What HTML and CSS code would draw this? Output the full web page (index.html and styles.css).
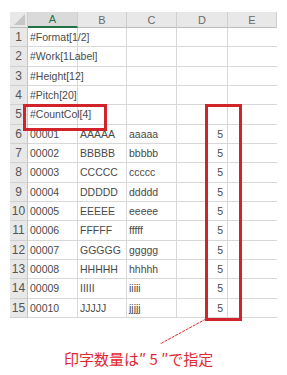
FILE: index.html
```html
<!DOCTYPE html>
<html>
<head>
<meta charset="utf-8">
<link rel="stylesheet" href="styles.css">
</head>
<body>
<div class="page">
  <div class="sheet">
    <div class="hd corner"><span class="tri"></span></div>
    <div class="hd col sel">A</div>
    <div class="hd col">B</div>
    <div class="hd col">C</div>
    <div class="hd col">D</div>
    <div class="hd col">E</div>

    <div class="rn">1</div><div class="c">#Format[1/2]</div><div class="c"></div><div class="c"></div><div class="c"></div><div class="c"></div>
    <div class="rn">2</div><div class="c">#Work[1Label]</div><div class="c"></div><div class="c"></div><div class="c"></div><div class="c"></div>
    <div class="rn">3</div><div class="c">#Height[12]</div><div class="c"></div><div class="c"></div><div class="c"></div><div class="c"></div>
    <div class="rn">4</div><div class="c">#Pitch[20]</div><div class="c"></div><div class="c"></div><div class="c"></div><div class="c"></div>
    <div class="rn">5</div><div class="c">#CountCol[4]</div><div class="c"></div><div class="c"></div><div class="c"></div><div class="c"></div>
    <div class="rn">6</div><div class="c">00001</div><div class="c">AAAAA</div><div class="c">aaaaa</div><div class="c num">5</div><div class="c"></div>
    <div class="rn">7</div><div class="c">00002</div><div class="c">BBBBB</div><div class="c">bbbbb</div><div class="c num">5</div><div class="c"></div>
    <div class="rn">8</div><div class="c">00003</div><div class="c">CCCCC</div><div class="c">ccccc</div><div class="c num">5</div><div class="c"></div>
    <div class="rn">9</div><div class="c">00004</div><div class="c">DDDDD</div><div class="c">ddddd</div><div class="c num">5</div><div class="c"></div>
    <div class="rn">10</div><div class="c">00005</div><div class="c">EEEEE</div><div class="c">eeeee</div><div class="c num">5</div><div class="c"></div>
    <div class="rn">11</div><div class="c">00006</div><div class="c">FFFFF</div><div class="c">fffff</div><div class="c num">5</div><div class="c"></div>
    <div class="rn">12</div><div class="c">00007</div><div class="c">GGGGG</div><div class="c">ggggg</div><div class="c num">5</div><div class="c"></div>
    <div class="rn">13</div><div class="c">00008</div><div class="c">HHHHH</div><div class="c">hhhhh</div><div class="c num">5</div><div class="c"></div>
    <div class="rn">14</div><div class="c">00009</div><div class="c">IIIII</div><div class="c">iiiii</div><div class="c num">5</div><div class="c"></div>
    <div class="rn">15</div><div class="c">00010</div><div class="c">JJJJJ</div><div class="c">jjjjj</div><div class="c num">5</div><div class="c"></div>
  </div>
  <div class="note">印字数量は″ 5 ″で指定</div>

  <div class="mark mark-a"></div>
  <div class="mark mark-d"></div>
  <svg class="leader" width="287" height="375" viewBox="0 0 287 375">
    <line x1="206" y1="319" x2="160" y2="344" stroke="#d9262c" stroke-width="1" stroke-dasharray="3 1"/>
  </svg>
</div>
</body>
</html>
```
FILE: styles.css
```css
* { box-sizing: border-box; }
html, body { margin: 0; padding: 0; background: #fff; }
.page {
  position: relative;
  width: 287px;
  height: 375px;
  padding: 12px 0 0 10px;
  font-family: "Liberation Sans", Arial, sans-serif;
}
.sheet {
  display: grid;
  grid-template-columns: 18px 50px 49px 50px 51px 49px;
  grid-template-rows: 16px repeat(15, 19.33px);
  width: 267px;
}
.hd {
  background: #e8e8e8;
  border-right: 1px solid #cfcfcf;
  border-bottom: 1px solid #bdbdbd;
  color: #6a6a6a;
  font-size: 11px;
  display: flex;
  align-items: center;
  justify-content: center;
}
.hd.col:last-child { border-right: none; }
.hd.sel {
  background: #dadada;
  color: #217346;
  border-bottom: 2px solid #217346;
}
.corner { position: relative; }
.tri {
  position: absolute;
  right: 2px;
  bottom: 2px;
  width: 0;
  height: 0;
  border-left: 11px solid transparent;
  border-bottom: 11px solid #c6c6c6;
}
.rn {
  background: #e8e8e8;
  border-right: 1px solid #c4c4c4;
  border-bottom: 1px solid #d0d0d0;
  color: #555;
  font-size: 12px;
  display: flex;
  align-items: center;
  justify-content: center;
}
.c {
  border-right: 1px solid #d8d8d8;
  border-bottom: 1px solid #d8d8d8;
  font-size: 10.5px;
  color: #4a4a4a;
  padding: 0 2px;
  display: flex;
  align-items: center;
  white-space: nowrap;
  overflow: visible;
}
.c:nth-child(6n) { border-right: none; }
.num { justify-content: flex-end; padding-right: 4px; }
.note {
  margin: 31px 0 0 54px;
  font-family: "Noto Sans CJK JP", "Noto Sans", sans-serif;
  font-size: 15px;
  line-height: 20px;
  color: #e2282f;
  white-space: nowrap;
}
.mark {
  position: absolute;
  border: 3px solid #d3232a;
}
.mark-a { left: 23px; top: 104px; width: 84px; height: 27px; }
.mark-d { left: 205px; top: 104px; width: 37px; height: 217px; }
.leader { position: absolute; left: 0; top: 0; pointer-events: none; }
```
